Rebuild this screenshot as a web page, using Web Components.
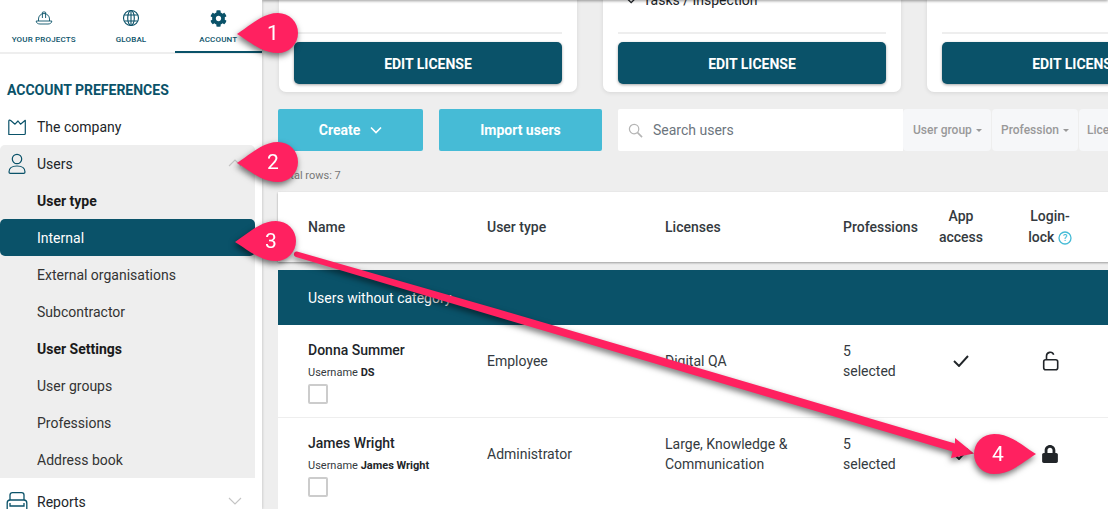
<!DOCTYPE html>
<html><head><meta charset="utf-8"><title>Users</title>
<style>
html,body{margin:0;padding:0;height:509px;overflow:hidden;background:#eee}
body{font-family:Roboto,"Liberation Sans",sans-serif;color:#212529;--teal:#0a5269;--cyan:#46bbd6;--cols:179px 178px 178px 75px 86px 92px;}
</style></head><body>
<app-shell>
  <side-nav slot="side">
    <tab-bar>
      <tab-item label="YOUR PROJECTS"><svg viewBox="0 0 18 18" width="18" height="18" fill="none" stroke="#0a5269" stroke-width=".9"><path d="M3.500 12V10a5.500 5.500 0 0 1 11 0v2"/><path d="M7.400 9V3.300L8 3h2l.6.3V9"/><path d="M1.200 12H16.800C16.800 14 15 15 13 15H5C3 15 1.200 14 1.200 12Z"/></svg></tab-item>
      <tab-item label="GLOBAL"><svg viewBox="0 0 18 18" width="18" height="18" fill="none" stroke="#0a5269" stroke-width="1.100"><circle cx="9" cy="9" r="7.500"/><ellipse cx="9" cy="9" rx="3.300" ry="7.500"/><path d="M9 1.500v15M2.300 6h13.400M2.300 12h13.400"/></svg></tab-item>
      <tab-item label="ACCOUNT" active><svg viewBox="0 0 512 512" width="17" height="17" fill="#0a5269"><path d="M487.4 315.7l-42.6-24.6c4.300-23.2 4.300-47 0-70.200l42.6-24.600c4.900-2.800 7.100-8.600 5.500-14-11.100-35.600-30-67.800-54.700-94.600-3.800-4.100-10-5.100-14.800-2.300L380.800 110c-17.900-15.400-38.500-27.300-60.800-35.100V25.800c0-5.600-3.900-10.500-9.400-11.700-36.700-8.200-74.300-7.800-109.200 0-5.500 1.200-9.400 6.100-9.400 11.700V75c-22.200 7.900-42.800 19.800-60.800 35.100L88.700 85.500c-4.900-2.800-11-1.900-14.800 2.300-24.700 26.700-43.600 58.900-54.700 94.600-1.700 5.400.6 11.200 5.500 14L67.300 221c-4.300 23.200-4.300 47 0 70.200l-42.600 24.600c-4.900 2.800-7.100 8.600-5.500 14 11.100 35.600 30 67.800 54.700 94.600 3.800 4.100 10 5.100 14.800 2.300l42.600-24.600c17.900 15.400 38.500 27.300 60.800 35.100v49.200c0 5.600 3.900 10.500 9.400 11.700 36.700 8.200 74.300 7.800 109.200 0 5.500-1.200 9.400-6.100 9.400-11.700v-49.200c22.200-7.900 42.800-19.800 60.800-35.100l42.600 24.600c4.900 2.800 11 1.900 14.800-2.300 24.700-26.700 43.600-58.900 54.700-94.600 1.500-5.500-.7-11.300-5.600-14.100zM256 336c-44.100 0-80-35.900-80-80s35.900-80 80-80 80 35.900 80 80-35.900 80-80 80z"/></svg></tab-item>
    </tab-bar>
    <section-title>ACCOUNT PREFERENCES</section-title>
    <nav-item kind="top"><svg slot="icon" viewBox="0 0 20 18" width="20" height="18" fill="none" stroke="#0a5269" stroke-width="1.200" stroke-linejoin="round"><path d="M1.800 16.500V3.300C1.800 2 2.800 1.800 3.700 2.500L8 6.200 11 3 13.500 6.200 18.300 2.300V15.500c0 .6-.4 1-1 1Z"/></svg>The company</nav-item>
    <nav-group>
      <nav-item kind="top" chevron="up"><svg slot="icon" viewBox="0 0 20 22" width="20" height="22" fill="none" stroke="#0a5269" stroke-width="1.200"><circle cx="10" cy="6" r="4.700"/><path d="M2 19c0-4 3.500-6 8-6s8 2 8 6c0 .8-.5 1.300-1.300 1.300H3.300C2.500 20.300 2 19.800 2 19z"/></svg>Users</nav-item>
      <nav-item kind="head">User type</nav-item>
      <nav-item kind="active">Internal</nav-item>
      <nav-item kind="sub">External organisations</nav-item>
      <nav-item kind="sub">Subcontractor</nav-item>
      <nav-item kind="head">User Settings</nav-item>
      <nav-item kind="sub">User groups</nav-item>
      <nav-item kind="sub">Professions</nav-item>
      <nav-item kind="sub">Address book</nav-item>
    </nav-group>
    <nav-item kind="top" chevron="down" style="margin-top:5px"><svg slot="icon" viewBox="0 0 22 22" width="22" height="22" fill="none" stroke="#0a5269" stroke-width="1.300" style="margin-left:-1px"><path d="M4 9V4c0-1.400 1-2.400 2.400-2.400h9.200C17 1.600 18 2.600 18 4v5"/><path d="M1.200 12c0-1.700 1.300-3 3-3h13.600c1.700 0 3 1.300 3 3v7H1.200z"/><path d="M4 12v3h14v-3"/></svg>Reports</nav-item>
  </side-nav>
  <main-pane slot="main">
    <card-row>
      <license-card></license-card>
      <license-card feature="Tasks / Inspection"></license-card>
      <license-card></license-card>
    </card-row>
    <tool-bar>
      <action-button style="width:145px">Create<svg slot="after" viewBox="0 0 12 8" width="12" height="8" fill="none" stroke="#fff" stroke-width="1.600"><path d="M1 1.500l5 5 5-5"/></svg></action-button>
      <action-button style="width:163px;margin-left:16px">Import users</action-button>
      <search-box style="margin-left:16px">Search users</search-box>
      <filter-chip style="width:88px">User group</filter-chip>
      <filter-chip style="width:86px;margin-left:1px;padding-left:9px">Profession</filter-chip>
      <filter-chip style="width:86px;margin-left:1px;padding-left:8px">Licenses</filter-chip>
    </tool-bar>
    <row-count>Total rows: 7</row-count>
    <table-head></table-head>
    <category-band>Users without category</category-band>
    <user-row name="Donna Summer" login="DS" type="Employee" licenses="Digital QA" lock="open"></user-row>
    <user-row name="James Wright" login="James Wright" type="Administrator" licenses="Large, Knowledge &amp; Communication" lock="closed"></user-row>
  </main-pane>
  <note-arrow slot="over"></note-arrow>
  <note-pin slot="over" num="1" x="237" y="13"></note-pin>
  <note-pin slot="over" num="2" x="237" y="142"></note-pin>
  <note-pin slot="over" num="3" x="235" y="221"></note-pin>
  <note-pin slot="over" num="4" x="974" y="434" dir="right"></note-pin>
</app-shell>
<script>
function def(name, css, html, init){
  customElements.define(name, class extends HTMLElement{
    connectedCallback(){
      if(this.shadowRoot) return;
      const r=this.attachShadow({mode:'open'});
      const a=n=>this.getAttribute(n)||'';
      r.innerHTML='<style>'+css+'</style>'+(typeof html==='function'?html(a,this):html);
      if(init) init(r,a,this);
    }
  });
}
def('app-shell',`:host{display:block;position:relative;width:1108px;height:509px;overflow:hidden}
 .w{display:flex;height:509px}`,`<div class="w"><slot name="side"></slot><slot name="main"></slot></div><slot name="over"></slot>`);
def('side-nav',`:host{display:block;width:262px;height:509px;flex:none;background:#fff;overflow:hidden;box-shadow:1px 0 2px rgba(0,0,0,.12);position:relative;z-index:1}`,`<slot></slot>`);
def('tab-bar',`:host{display:flex;height:52px;border-bottom:2px solid #eee;box-sizing:content-box}`,`<slot></slot>`);
def('tab-item',`:host{display:flex;flex:1 1 0;flex-direction:column;align-items:center;position:relative;color:#0a5269;height:54px;box-sizing:border-box;padding-top:9px}
 :host([active])::after{content:"";position:absolute;left:0;right:0;top:51px;height:2px;background:#0a5269}
 .i{height:18px;display:flex;align-items:center}.l{font-size:8px;font-weight:500;margin-top:8px;line-height:10px;white-space:nowrap;letter-spacing:.02em}
 svg,::slotted(svg){display:block}`,a=>`<div class="i"><slot></slot></div><div class="l">${a('label')}</div>`);
def('section-title',`:host{display:block;margin-top:26px;height:20px;line-height:20px;padding-left:7px;font-size:14px;font-weight:700;color:#0a5269;margin-bottom:8px;white-space:nowrap}`,`<slot></slot>`);
def('nav-group',`:host{display:block;width:255px;height:333px;background:#eee;border-radius:5px 5px 0 0}`,`<slot></slot>`);
def('nav-item',`:host{display:flex;align-items:center;height:37px;width:255px;box-sizing:border-box;padding-left:37px;font-size:14px;color:#333;position:relative;white-space:nowrap;line-height:20px}
 :host([kind=top]){color:#212529;font-weight:400}
 :host([kind=head]){font-weight:700;color:#1a1a1a}
 :host([kind=active]){background:#0a5269;color:#fff;border-radius:5px}
 .ic{position:absolute;left:7px;top:0;bottom:0;display:flex;align-items:center}
 .ch{position:absolute;left:228px;top:14px}`,(a)=>`<span class="ic"><slot name="icon"></slot></span><slot></slot>`+(a('chevron')?`<svg class="ch" viewBox="0 0 14 8" width="14" height="8" fill="none" stroke="#c4c4c4" stroke-width="1.100">${a('chevron')=='up'?'<path d="M1 7l6-6 6 6"/>':'<path d="M1 1l6 6 6-6"/>'}</svg>`:''));
def('main-pane',`:host{display:block;flex:1;min-width:0;height:509px;padding-left:16px;box-sizing:border-box;position:relative;overflow:hidden;background:#eee}
 :host::before{content:"";position:absolute;left:0;right:0;top:-3px;height:3px;box-shadow:0 1px 3px rgba(0,0,0,.4);z-index:3}`,`<slot></slot>`);
def('card-row',`:host{display:flex;align-items:flex-end;gap:26px;height:92px;padding-left:1px;width:1000px;overflow:visible}`,`<slot></slot>`);
def('license-card',`:host{display:block;width:298px;height:132px;flex:none;background:#fff;border-radius:0 0 7px 7px;box-shadow:0 1px 4px rgba(0,0,0,.1);box-sizing:border-box;padding:0 15px;position:relative}
 .f{position:absolute;left:24px;bottom:82px;font-size:14px;line-height:20px;color:#212529;display:flex;align-items:center;gap:5px;white-space:nowrap}
 .d{position:absolute;left:15px;right:15px;bottom:58px;height:2px;background:#eee}
 .b{position:absolute;left:15px;right:15px;bottom:8px;height:42px;box-sizing:border-box;padding-top:1px;border-radius:5px;background:#0a5269;color:#fff;font-size:14px;font-weight:700;display:flex;align-items:center;justify-content:center;box-shadow:0 1px 3px rgba(0,0,0,.35)}`,
 a=>(a('feature')?`<div class="f"><svg viewBox="0 0 12 9" width="11" height="8" fill="none" stroke="#212529" stroke-width="1.500"><path d="M1 4l3.500 3.500L11 1"/></svg>${a('feature')}</div>`:'')+`<div class="d"></div><div class="b">EDIT LICENSE</div>`);
def('tool-bar',`:host{display:flex;height:42px;margin-top:17px;width:1000px}`,`<slot></slot>`);
def('action-button',`:host{display:flex;align-items:center;justify-content:center;gap:10px;flex:none;height:42px;background:#46bbd6;color:#fff;border-radius:2px;font-size:14px;font-weight:700}`,`<slot></slot><slot name="after"></slot>`);
def('search-box',`:host{display:flex;align-items:center;flex:none;width:285px;height:42px;background:#fff;border-radius:2px 0 0 2px;color:#6c757d;font-size:14px;box-sizing:border-box;padding-left:10px;gap:10px}`,`<svg viewBox="0 0 16 16" width="15" height="15" fill="none" stroke="#b5b5b5" stroke-width="1.300"><circle cx="6.500" cy="6.500" r="5"/><path d="M10.200 10.200L15 15" stroke-width="1.700"/></svg><slot></slot>`);
def('filter-chip',`:host{display:flex;align-items:center;flex:none;height:42px;background:#f6f7f9;border-radius:4px;color:#999;font-size:12px;font-weight:500;box-sizing:border-box;padding-left:10px;white-space:nowrap;overflow:hidden}
 i{display:inline-block;margin-left:4px;border:3px solid transparent;border-top-color:#999;border-bottom:0;vertical-align:middle}`,`<span><slot></slot><i></i></span>`);
def('row-count',`:host{display:block;height:41px;padding-top:17px;box-sizing:border-box;font-size:11px;line-height:16px;color:#777;white-space:nowrap}`,`<slot></slot>`);
const cellGrid=`display:grid;grid-template-columns:var(--cols);padding-left:30px;`;
def('table-head',`:host{${cellGrid}height:70px;background:#fff;box-shadow:0 1px 2px rgba(0,0,0,.35);align-items:center;font-size:14px;font-weight:500;color:#343a40;line-height:21px;position:relative;z-index:1;margin-right:-2px}
 .c{text-align:center}.q{display:inline-block;vertical-align:-3px}`,`<div>Name</div><div>User type</div><div>Licenses</div><div>Professions</div><div class="c">App<br>access</div><div class="c">Login-<br>lock <svg class="q" viewBox="0 0 14 14" width="14" height="14" fill="none" stroke="#46bbd6" stroke-width="1.300"><circle cx="7" cy="7" r="6"/><text x="7" y="10.300" font-size="9.500" font-weight="500" font-family="Roboto" fill="#46bbd6" stroke="none" text-anchor="middle">?</text></svg></div>`);
def('category-band',`:host{display:flex;align-items:center;height:55px;margin-top:8px;background:#0a5269;color:#fff;font-size:14px;font-weight:400;padding-left:30px}`,`<slot></slot>`);
def('user-row',`:host{${cellGrid}height:93px;box-sizing:border-box;background:#fff;border-bottom:1px solid #eee;padding-top:16px;font-size:14px;line-height:20px;color:#343a40}
 .v{height:40px;display:flex;align-items:center}
 .n{font-weight:500;line-height:18px;color:#212529}
 .u{font-size:11px;line-height:14px;margin-top:7px;color:#343a40;white-space:nowrap}.u b{font-weight:700;color:#212529}
 .k{width:20px;height:20px;box-sizing:border-box;border:2px solid #ccc;border-radius:2px;margin-top:4px;background:#fff}
 .m{height:40px;display:flex;align-items:center;justify-content:center}`,
 a=>`<div><div class="n">${a('name')}</div><div class="u">Username <b>${a('login')}</b></div><div class="k"></div></div>
 <div class="v">${a('type')}</div><div class="v"><span style="max-width:150px">${a('licenses').replace('&','&amp;')}</span></div><div class="v"><span>5<br>selected</span></div>
 <div class="m"><svg viewBox="0 0 16 12" width="16" height="12" fill="none" stroke="#212529" stroke-width="1.900"><path d="M1 6l5 5 9-10"/></svg></div>
 <div class="m">`+(a('lock')=='open'?`<svg viewBox="0 0 17 20" width="17" height="20" fill="none" stroke="#212529" stroke-width="1.600"><rect x="1.700" y="8.700" width="14" height="10" rx="2"/><path d="M4.500 8.500V5a3.700 3.700 0 0 1 7.200-1.200"/></svg>`:`<svg viewBox="0 0 448 512" width="16" height="18" fill="#212529"><path d="M400 224h-24v-72C376 68.200 307.800 0 224 0S72 68.200 72 152v72H48c-26.500 0-48 21.500-48 48v192c0 26.500 21.500 48 48 48h352c26.500 0 48-21.500 48-48V272c0-26.500-21.500-48-48-48zm-104 0H152v-72c0-39.700 32.300-72 72-72s72 32.300 72 72v72z"/></svg>`)+`</div>`);
def('note-pin',`:host{display:block;position:absolute;width:62px;height:40px;filter:drop-shadow(-1px 3px 3px rgba(0,0,0,.55));z-index:5}
 svg{display:block;position:absolute;left:0;top:0;overflow:visible}
 .t{position:absolute;top:0;height:40px;line-height:40px;width:20px;text-align:center;color:#fff;font-size:21px;font-weight:400}`,
 (a,h)=>{const x=+a('x'),y=+a('y');h.style.left=x+'px';h.style.top=y+'px';const right=a('dir')=='right';
  const d=right?'M62 20C49 28 37 40 20 40A20 20 0 0 1 20 0C37 0 49 12 62 20Z':'M0 21C13 13 25 0 41 0A20 20 0 0 1 41 40C25 40 13 29 0 21Z';
  return `<svg width="62" height="40"><path d="${d}" fill="#ff2160"/></svg><div class="t" style="left:${right?14:26}px">${a('num')}</div>`;});
def('note-arrow',`:host{display:block;position:absolute;left:0;top:0;width:1108px;height:509px;pointer-events:none;z-index:4}
 svg{display:block;filter:drop-shadow(-1px 3px 3px rgba(0,0,0,.55))}`,
 `<svg width="1108" height="509"><path d="M297 251.500L500 309.700L955 443.500L955 438L974 453.500L951 458L952.500 451.500L500 317.700L296 257A2.800 2.800 0 0 1 297 251.500Z" fill="#ff2160"/></svg>`);
</script>
</body></html>
